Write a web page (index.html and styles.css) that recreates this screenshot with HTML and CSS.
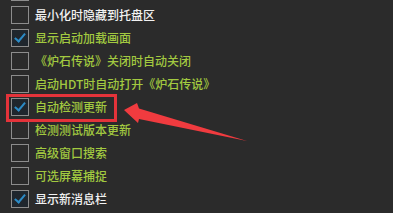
FILE: index.html
```html
<!DOCTYPE html>
<html lang="zh-CN">
<head>
  <meta charset="UTF-8" />
  <title>设置</title>
  <link rel="stylesheet" href="styles.css">
</head>
<body>
  <div class="options">
    <div class="option"><span class="box"></span></div>
    <div class="option"><span class="box"></span><span class="label white">最小化时隐藏到托盘区</span></div>
    <div class="option"><span class="box checked"></span><span class="label">显示启动加载画面</span></div>
    <div class="option"><span class="box"></span><span class="label">《炉石传说》关闭时自动关闭</span></div>
    <div class="option"><span class="box"></span><span class="label">启动HDT时自动打开《炉石传说》</span></div>
    <div class="option"><span class="box checked"></span><span class="label">自动检测更新</span></div>
    <div class="option"><span class="box"></span><span class="label">检测测试版本更新</span></div>
    <div class="option"><span class="box"></span><span class="label">高级窗口搜索</span></div>
    <div class="option"><span class="box"></span><span class="label">可选屏幕捕捉</span></div>
    <div class="option"><span class="box checked"></span><span class="label white">显示新消息栏</span></div>
  </div>

  <div class="highlight"></div>
  <svg class="arrow" width="393" height="213" viewBox="0 0 393 213">
    <polygon points="124,110 137,103 139,108.5 247,141 139,119 138,123" />
  </svg>
</body>
</html>
```

FILE: styles.css
```css
body {
  margin: 0;
  background: #2b2b2b;
  font-family: "Noto Sans CJK SC", "Microsoft YaHei", sans-serif;
  overflow: hidden;
  position: relative;
  height: 213px;
}

.options {
  margin-top: -20px;
  padding-left: 11px;
}

.option {
  display: flex;
  align-items: center;
  gap: 6px;
  height: 23px;
}

.box {
  width: 16px;
  height: 16px;
  border: 1px solid #8c8c8c;
  background: #2b2b2b;
  position: relative;
  flex: none;
}

.box.checked {
  background: #1f262d;
}

.box.checked::after {
  content: "";
  position: absolute;
  left: 5px;
  top: 1px;
  width: 4px;
  height: 9px;
  border-right: 2.5px solid #2c8bc6;
  border-bottom: 2.5px solid #2c8bc6;
  transform: rotate(40deg);
}

.label {
  font-size: 12px;
  font-weight: 500;
  color: #a2c940;
  line-height: 23px;
  white-space: nowrap;
}

.label.white {
  color: #f2f2f2;
}

.highlight {
  position: absolute;
  left: 6px;
  top: 94px;
  width: 105px;
  height: 22px;
  border: 3px solid #e4333a;
}

.arrow {
  position: absolute;
  left: 0;
  top: 0;
}

.arrow polygon {
  fill: #f03b3f;
}
```
